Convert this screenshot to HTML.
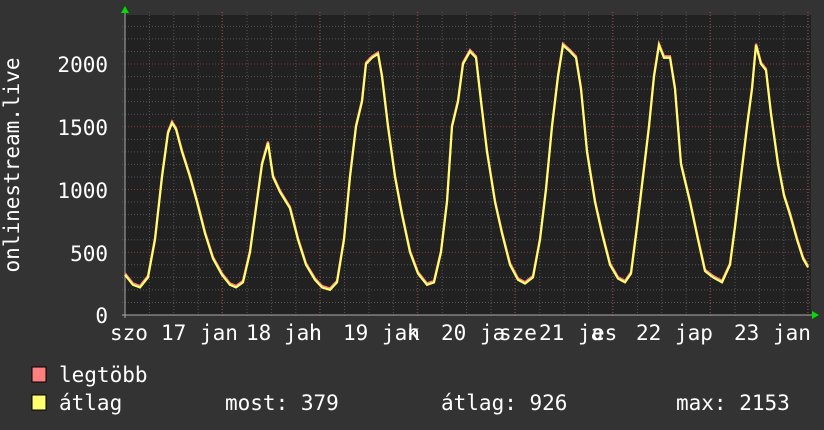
<!DOCTYPE html>
<html><head><meta charset="utf-8"><style>
html,body{margin:0;padding:0;background:#333;}
svg{display:block}
text{font-family:"DejaVu Sans Mono","Liberation Mono",monospace;fill:#fff;font-size:21px}
</style></head><body>
<svg id="s" width="824" height="430" xmlns="http://www.w3.org/2000/svg">
<rect width="824" height="430" fill="#333"/>
<rect x="125" y="15" width="686" height="300" fill="#212121"/>
<g id="grid"></g>
<path id="p1" fill="none" stroke="#ff7f7f" stroke-width="2.2"/>
<path id="p2" fill="none" stroke="#ffff70" stroke-width="2.2"/>
<polygon points="121,13 129,13 125,6" fill="#00dd00"/>
<polygon points="812,311 812,319 819,315" fill="#00dd00"/>
<text x="108" y="72" text-anchor="end">2000</text>
<text x="108" y="135" text-anchor="end">1500</text>
<text x="108" y="198" text-anchor="end">1000</text>
<text x="108" y="261" text-anchor="end">500</text>
<text x="108" y="323" text-anchor="end">0</text>
<text transform="translate(19,165) rotate(-90)" text-anchor="middle">onlinestream.live</text>
<text x="110" y="340">szo</text>
<text x="161" y="340">17</text>
<text x="200" y="340">jan</text>
<text x="246" y="340">18</text>
<text x="284" y="340">jan</text>
<text x="309" y="340">h</text>
<text x="343" y="340">19</text>
<text x="382" y="340">jan</text>
<text x="407" y="340">k</text>
<text x="441" y="340">20</text>
<text x="480" y="340">ja</text>
<text x="499" y="340">sze</text>
<text x="539" y="340">21</text>
<text x="578" y="340">ja</text>
<text x="592" y="340">es</text>
<text x="636" y="340">22</text>
<text x="675" y="340">jap</text>
<text x="734" y="340">23</text>
<text x="773" y="340">jan</text>
<rect x="32" y="367" width="14" height="15" fill="#ff7f7f" stroke="#000" stroke-width="1"/>
<rect x="32" y="395" width="14" height="15" fill="#ffff70" stroke="#000" stroke-width="1"/>
<text x="59" y="382">legtöbb</text>
<text x="59" y="410">átlag</text>
<text x="225" y="410">most: 379</text>
<text x="441" y="410">átlag: 926</text>
<text x="676" y="410">max: 2153</text>
</svg>
<script>
var g=document.getElementById('grid'),h='';
for(var x=125;x<=811;x+=24.4){h+='<line x1="'+x+'" y1="12" x2="'+x+'" y2="318" stroke="#555" stroke-dasharray="1,2"/>';}
for(var v=100;v<=2300;v+=100){var y=315-v*0.12549;h+='<line x1="122" y1="'+y+'" x2="811" y2="'+y+'" stroke="'+(v%500==0?'#8a3a3a':'#555')+'" stroke-dasharray="1,2"/>';}
for(var x=222;x<=811;x+=97.6){h+='<line x1="'+x+'" y1="12" x2="'+x+'" y2="318" stroke="#8a3a3a" stroke-dasharray="1,2"/>';}
h+='<line x1="122" y1="315" x2="812" y2="315" stroke="#aaa"/><line x1="125" y1="12" x2="125" y2="318" stroke="#aaa"/>';
g.innerHTML=h;
var k=[125,320,133,240,140,220,148,300,155,600,162,1100,168,1450,172,1530,176,1480,182,1300,190,1100,197,900,205,650,213,450,222,320,230,240,236,220,243,260,250,500,256,850,262,1200,268,1370,273,1100,280,980,290,850,298,600,306,400,315,280,322,220,330,200,337,260,344,600,350,1100,356,1500,362,1700,366,2000,372,2050,378,2080,382,1900,388,1500,395,1100,402,800,410,500,418,330,427,240,434,260,441,500,447,900,452,1500,458,1700,463,2000,470,2100,476,2050,481,1700,487,1300,495,900,502,650,510,400,518,280,525,250,533,300,540,600,546,1000,552,1500,558,1900,563,2150,570,2100,576,2050,581,1800,587,1300,595,900,602,650,610,400,618,290,625,260,631,330,637,700,643,1100,649,1500,654,1900,659,2150,664,2050,670,2050,675,1800,681,1200,690,900,698,600,705,350,713,300,722,260,730,400,735,700,741,1100,747,1500,752,1800,756,2150,761,2000,766,1950,771,1600,778,1200,784,950,790,800,797,600,803,450,808,380];
var d1='',d2='';
for(var i=0;i<k.length;i+=2){var y=315-k[i+1]*0.12549;d1+=(i?'L':'M')+k[i]+','+(y-1.5);d2+=(i?'L':'M')+k[i]+','+y;}
document.getElementById('p1').setAttribute('d',d1);
document.getElementById('p2').setAttribute('d',d2);
</script>
</body></html>
